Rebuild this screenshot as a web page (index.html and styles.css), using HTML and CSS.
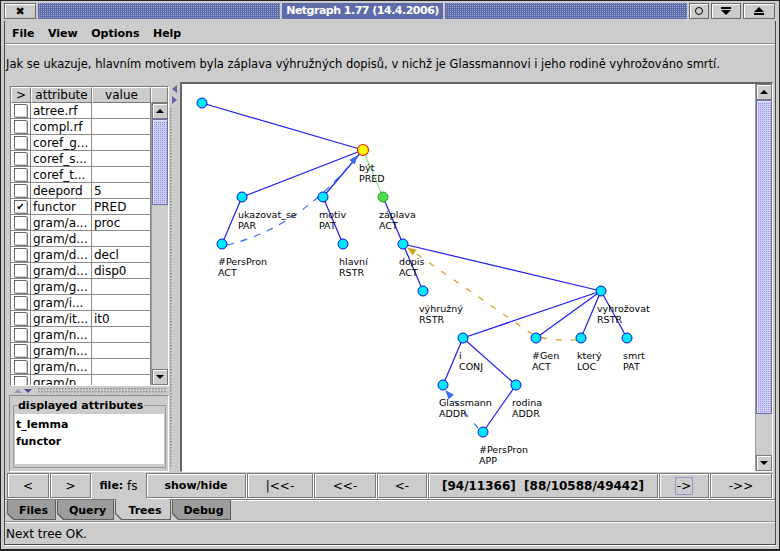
FILE: index.html
```html
<!DOCTYPE html>
<html>
<head>
<meta charset="utf-8">
<title>Netgraph</title>
<link rel="stylesheet" href="styles.css">
</head>
<body>
<div class="window">
  <div class="titlebar">
    <div class="tbtn close">✖</div>
    <div class="tfill"></div>
    <div class="ttitle">Netgraph 1.77 (14.4.2006)</div>
    <div class="tfill"></div>
    <div class="tbtn ticon"><svg width="10" height="10" viewBox="0 0 10 10"><circle cx="5" cy="5" r="3.5" fill="none" stroke="#000" stroke-width="1"/></svg></div>
    <div class="tbtn tmin"><svg width="10" height="8" viewBox="0 0 10 8"><rect x="0" y="0" width="10" height="2" fill="#000"/><polygon points="0,3 10,3 5,8" fill="#000"/></svg></div>
    <div class="tbtn tmax"><svg width="10" height="8" viewBox="0 0 10 8"><polygon points="5,0 10,5 0,5" fill="#000"/><rect x="0" y="6" width="10" height="2" fill="#000"/></svg></div>
  </div>
  <div class="inner">
    <div class="menubar">
      <span class="menu">File</span>
      <span class="menu">View</span>
      <span class="menu">Options</span>
      <span class="menu">Help</span>
    </div>
    <div class="sentence">Jak se ukazuje, hlavním motivem byla záplava výhružných dopisů, v nichž je Glassmannovi i jeho rodině vyhrožováno smrtí.</div>
    <div class="main">
      <div class="left">
        <div class="tablebox">
          <div class="thead">
            <div class="th">&gt;</div>
            <div class="th">attribute</div>
            <div class="th">value</div>
            <div class="th"></div>
          </div>
          <div class="tbody">
            <div class="rows">
              <div class="row"><div class="cb"><span class="box"></span></div><div class="cell">atree.rf</div><div class="cell"></div></div>
              <div class="row"><div class="cb"><span class="box"></span></div><div class="cell">compl.rf</div><div class="cell"></div></div>
              <div class="row"><div class="cb"><span class="box"></span></div><div class="cell">coref_g...</div><div class="cell"></div></div>
              <div class="row"><div class="cb"><span class="box"></span></div><div class="cell">coref_s...</div><div class="cell"></div></div>
              <div class="row"><div class="cb"><span class="box"></span></div><div class="cell">coref_t...</div><div class="cell"></div></div>
              <div class="row"><div class="cb"><span class="box"></span></div><div class="cell">deepord</div><div class="cell">5</div></div>
              <div class="row"><div class="cb"><span class="box checked">✔</span></div><div class="cell">functor</div><div class="cell">PRED</div></div>
              <div class="row"><div class="cb"><span class="box"></span></div><div class="cell">gram/a...</div><div class="cell">proc</div></div>
              <div class="row"><div class="cb"><span class="box"></span></div><div class="cell">gram/d...</div><div class="cell"></div></div>
              <div class="row"><div class="cb"><span class="box"></span></div><div class="cell">gram/d...</div><div class="cell">decl</div></div>
              <div class="row"><div class="cb"><span class="box"></span></div><div class="cell">gram/d...</div><div class="cell">disp0</div></div>
              <div class="row"><div class="cb"><span class="box"></span></div><div class="cell">gram/g...</div><div class="cell"></div></div>
              <div class="row"><div class="cb"><span class="box"></span></div><div class="cell">gram/i...</div><div class="cell"></div></div>
              <div class="row"><div class="cb"><span class="box"></span></div><div class="cell">gram/it...</div><div class="cell">it0</div></div>
              <div class="row"><div class="cb"><span class="box"></span></div><div class="cell">gram/n...</div><div class="cell"></div></div>
              <div class="row"><div class="cb"><span class="box"></span></div><div class="cell">gram/n...</div><div class="cell"></div></div>
              <div class="row"><div class="cb"><span class="box"></span></div><div class="cell">gram/n...</div><div class="cell"></div></div>
              <div class="row"><div class="cb"><span class="box"></span></div><div class="cell">gram/n...</div><div class="cell"></div></div>
            </div>
            <div class="vscroll small">
              <div class="sbtn"><span class="tri-up"></span></div>
              <div class="thumb"></div>
              <div class="track"></div>
              <div class="sbtn"><span class="tri-down"></span></div>
            </div>
          </div>
        </div>
        <div class="hsplit">
          <span class="mini-up"></span><span class="mini-down"></span>
          <div class="dots"></div>
        </div>
        <div class="attrs">
          <fieldset class="fs">
            <legend>displayed attributes</legend>
            <div class="list">
              <div>t_lemma</div>
              <div>functor</div>
            </div>
          </fieldset>
        </div>
      </div>
      <div class="vdiv">
        <span class="arr-l"></span>
        <span class="arr-r"></span>
        <div class="dots"></div>
      </div>
      <div class="graph">
        <svg class="canvas" width="573" height="387" viewBox="182 84 573 387">
          <defs>
            <marker id="ab" viewBox="0 0 10 10" refX="9" refY="5" markerWidth="9" markerHeight="9" orient="auto" markerUnits="userSpaceOnUse">
              <path d="M0,1 L10,5 L0,9 z" fill="#3a6cf0"/>
            </marker>
            <marker id="ao" viewBox="0 0 10 10" refX="9" refY="5" markerWidth="9" markerHeight="9" orient="auto" markerUnits="userSpaceOnUse">
              <path d="M0,1 L10,5 L0,9 z" fill="#d4a020"/>
            </marker>
          </defs>
          <g stroke="#1c1cf0" stroke-width="1.2" fill="none">
            <line x1="202" y1="103" x2="363" y2="150"/>
            <line x1="363" y1="150" x2="242" y2="197"/>
            <line x1="363" y1="150" x2="323" y2="197"/>
            <line x1="242" y1="197" x2="222" y2="244"/>
            <line x1="323" y1="197" x2="343" y2="244"/>
            <line x1="383" y1="197" x2="403" y2="244"/>
            <line x1="403" y1="244" x2="423" y2="291"/>
            <line x1="403" y1="244" x2="601" y2="291"/>
            <line x1="601" y1="291" x2="463" y2="338"/>
            <line x1="601" y1="291" x2="536" y2="338"/>
            <line x1="601" y1="291" x2="581" y2="338"/>
            <line x1="601" y1="291" x2="627" y2="338"/>
            <line x1="463" y1="338" x2="443" y2="385"/>
            <line x1="463" y1="338" x2="516" y2="385"/>
            <line x1="516" y1="385" x2="483" y2="432"/>
          </g>
          <line x1="363" y1="150" x2="383" y2="197" stroke="#66e066" stroke-width="1"/>
          <path d="M227,245 Q300,228 357,156" stroke="#3a6cf0" stroke-width="1.2" fill="none" stroke-dasharray="7 7" marker-end="url(#ab)"/>
          <path d="M478,428 L446,391" stroke="#3a6cf0" stroke-width="1.2" fill="none" stroke-dasharray="6 9" marker-end="url(#ab)"/>
          <path d="M577,340 Q545,341 532,334 L408,248" stroke="#d4a020" stroke-width="1.2" fill="none" stroke-dasharray="6 9" marker-end="url(#ao)"/>
          <g fill="#00e8ff" stroke="#1010d8" stroke-width="1">
            <circle cx="202" cy="103" r="5"/>
            <circle cx="242" cy="197" r="5"/>
            <circle cx="323" cy="197" r="5"/>
            <circle cx="222" cy="244" r="5"/>
            <circle cx="343" cy="244" r="5"/>
            <circle cx="403" cy="244" r="5"/>
            <circle cx="423" cy="291" r="5"/>
            <circle cx="601" cy="291" r="5"/>
            <circle cx="463" cy="338" r="5"/>
            <circle cx="536" cy="338" r="5"/>
            <circle cx="581" cy="338" r="5"/>
            <circle cx="627" cy="338" r="5"/>
            <circle cx="443" cy="385" r="5"/>
            <circle cx="516" cy="385" r="5"/>
            <circle cx="483" cy="432" r="5"/>
          </g>
          <circle cx="383" cy="197" r="5" fill="#50dc50" stroke="#2a9a2a" stroke-width="1"/>
          <circle cx="363" cy="150" r="5.5" fill="#ffff00" stroke="#ee2200" stroke-width="1.2"/>
          <g class="lbl">
            <text x="359" y="171">být</text><text x="359" y="182">PRED</text>
            <text x="238" y="218">ukazovat_se</text><text x="238" y="229">PAR</text>
            <text x="319" y="218">motiv</text><text x="319" y="229">PAT</text>
            <text x="379" y="218">záplava</text><text x="379" y="229">ACT</text>
            <text x="218" y="265">#PersPron</text><text x="218" y="276">ACT</text>
            <text x="339" y="265">hlavní</text><text x="339" y="276">RSTR</text>
            <text x="399" y="265">dopis</text><text x="399" y="276">ACT</text>
            <text x="419" y="312">výhružný</text><text x="419" y="323">RSTR</text>
            <text x="597" y="312">vyhrožovat</text><text x="597" y="323">RSTR</text>
            <text x="459" y="359">i</text><text x="459" y="370">CONJ</text>
            <text x="532" y="359">#Gen</text><text x="532" y="370">ACT</text>
            <text x="577" y="359">který</text><text x="577" y="370">LOC</text>
            <text x="623" y="359">smrt</text><text x="623" y="370">PAT</text>
            <text x="439" y="406">Glassmann</text><text x="439" y="417">ADDR</text>
            <text x="512" y="406">rodina</text><text x="512" y="417">ADDR</text>
            <text x="479" y="453">#PersPron</text><text x="479" y="464">APP</text>
          </g>
        </svg>
        <div class="vscroll big">
          <div class="sbtn"><span class="tri-up"></span></div>
          <div class="thumb"></div>
          <div class="track"></div>
          <div class="sbtn"><span class="tri-down"></span></div>
        </div>
      </div>
    </div>
    <div class="buttons">
      <div class="btn">&lt;</div>
      <div class="btn">&gt;</div>
      <div class="label"><b>file:</b>&nbsp;fs</div>
      <div class="btn bold">show/hide</div>
      <div class="btn">|&lt;&lt;-</div>
      <div class="btn">&lt;&lt;-</div>
      <div class="btn">&lt;-</div>
      <div class="btn bold big">[94/11366]&nbsp; [88/10588/49442]</div>
      <div class="btn"><span class="focus">-&gt;</span></div>
      <div class="btn">-&gt;&gt;</div>
    </div>
    <div class="tabs">
      <div class="tab"><span>Files</span></div>
      <div class="tab"><span>Query</span></div>
      <div class="tab sel"><span>Trees</span></div>
      <div class="tab"><span>Debug</span></div>
    </div>
    <div class="status">Next tree OK.</div>
  </div>
</div>
</body>
</html>
```
FILE: styles.css
```css
* { box-sizing: border-box; }
html, body { margin: 0; padding: 0; background: #cccccc; }
body { font-family: "DejaVu Sans", "Liberation Sans", sans-serif; font-size: 12px; color: #000; }

.window {
  width: 780px; height: 551px;
  background: #cccccc;
  border: 1px solid #222;
  border-bottom-width: 2px;
  padding: 0 3px 4px 3px;
  display: flex; flex-direction: column;
  overflow: hidden;
}

/* title bar */
.titlebar {
  height: 20px; flex: none;
  display: flex; align-items: center; gap: 2px;
  padding: 1px 0 1px 0;
}
.tbtn {
  height: 16px; background: #cccccc;
  border: 1px solid #6a6a6a;
  box-shadow: inset 1px 1px 0 #fff;
  display: flex; align-items: center; justify-content: center;
  flex: none;
}
.close { width: 32px; font-size: 11px; font-weight: bold; }
.ticon { width: 20px; }
.tmin { width: 30px; }
.tmax { width: 32px; margin-right: 1px; }
.tfill {
  flex: 1; height: 16px;
  background-color: #5d6aa8;
  background-image: conic-gradient(#9aa5d8 0 25%, transparent 0 100%);
  background-size: 2px 2px;
}
.ttitle {
  height: 16px; line-height: 16px;
  background: #5f6caa; color: #fff;
  font-weight: bold; font-size: 11px; letter-spacing: -0.5px;
  padding: 0 4px; white-space: nowrap;
}

/* inner frame */
.inner {
  flex: 1; display: flex; flex-direction: column;
  border: 1px solid #4a4a4a; border-top: 0;
  min-height: 0;
}
.menubar {
  height: 23px; flex: none;
  display: flex; align-items: center;
  border-bottom: 1px solid #8a8a8a;
  font-weight: bold; font-size: 11px;
  padding-top: 2px;
}
.menu { padding: 0 6.5px 0 7px; }
.sentence {
  height: 36px; flex: none; line-height: 34px;
  padding-top: 2px;
  padding-left: 1px; white-space: nowrap;
  border-top: 1px solid #fff;
  font-size: 11.5px;
}

/* main split area */
.main {
  height: 392px; flex: none;
  display: flex;
  padding: 2px 2px 0 3px;
}
.left {
  width: 161px; flex: none;
  display: flex; flex-direction: column;
  padding: 4px 0 0 1px;
}
.tablebox {
  height: 300px; flex: none;
  margin-left: 1px;
  border: 1px solid #7a7a7a;
  border-right-color: #fff; border-bottom-color: #fff;
  display: flex; flex-direction: column;
  background: #cccccc;
}
.thead {
  height: 16px; flex: none;
  display: grid; grid-template-columns: 20px 61px 59px 17px;
}
.th {
  border-top: 1px solid #fff; border-left: 1px solid #fff;
  border-right: 1px solid #7a7a7a; border-bottom: 1px solid #7a7a7a;
  text-align: center; line-height: 14px; font-size: 12px;
  background: #cccccc;
}
.tbody { flex: 1; display: flex; min-height: 0; }
.rows { width: 140px; flex: none; background: #fff; overflow: hidden; }
.row {
  height: 16px;
  display: grid; grid-template-columns: 20px 61px 59px;
}
.row > div {
  border-right: 1px solid #8a8a8a; border-bottom: 1px solid #8a8a8a;
  line-height: 16px; padding-left: 2px; white-space: nowrap; overflow: hidden;
}
.cb { background: #fff; display: flex; align-items: center; justify-content: center; padding-left: 0 !important; }
.box {
  width: 13px; height: 13px;
  border: 1px solid #6a6a6a;
  border-right-color: #cfcfcf; border-bottom-color: #cfcfcf;
  box-shadow: inset 1px 1px 0 #fff, 1px 1px 0 #777;
  background: #fff;
  font-size: 10px; line-height: 11px; text-align: center; font-weight: bold;
}

/* scrollbars */
.vscroll {
  width: 17px; flex: none;
  display: flex; flex-direction: column;
  background: #cccccc;
  border-left: 1px solid #9a9a9a;
}
.sbtn {
  height: 16px; flex: none;
  border: 1px solid #7a7a7a;
  box-shadow: inset 1px 1px 0 #fff;
  background: #cccccc;
  display: flex; align-items: center; justify-content: center;
}
.tri-up { width: 0; height: 0; border-left: 4px solid transparent; border-right: 4px solid transparent; border-bottom: 4px solid #000; }
.tri-down { width: 0; height: 0; border-left: 4px solid transparent; border-right: 4px solid transparent; border-top: 4px solid #000; }
.thumb {
  flex: none;
  border: 1px solid #6e6ea6;
  box-shadow: inset 1px 1px 0 #e6e6ff;
  background-color: #ccccff;
  background-image: conic-gradient(#9696cc 0 25%, transparent 0 100%);
  background-size: 2px 2px;
}
.track { flex: 1; background: #cccccc; }
.small .thumb { height: 86px; }
.big .thumb { height: 314px; }

.hsplit {
  height: 9px; flex: none;
  display: flex; align-items: center; gap: 2px;
  padding-left: 5px;
}
.mini-up { width: 0; height: 0; border-left: 4px solid transparent; border-right: 4px solid transparent; border-bottom: 4px solid #9a9ac0; }
.mini-down { width: 0; height: 0; border-left: 4px solid transparent; border-right: 4px solid transparent; border-top: 4px solid #4a4a9a; }
.dots {
  flex: 1; align-self: stretch;
  background-image: conic-gradient(#9a9a9a 0 25%, transparent 0 100%);
  background-size: 3px 3px;
  margin: 2px 3px;
}

.attrs {
  flex: 1;
  border: 1px solid #8a8a8a;
  border-right-color: #fff; border-bottom-color: #fff;
  padding: 3px 2px 3px 3px;
  display: flex;
}
.fs {
  flex: 1; margin: 0; min-width: 0;
  border: 1px solid #999;
  padding: 2px 1px 1px 1px;
}
.fs legend {
  font-weight: bold; font-size: 11px; padding: 0 1px; margin-left: 2px;
}
.list {
  background: #fff; height: 50px;
  font-weight: bold; font-size: 11px;
  padding: 2px 0 0 1px; line-height: 17px;
}

.vdiv {
  width: 11px; flex: none;
  display: flex; flex-direction: column; align-items: center;
  padding-top: 3px; gap: 3px;
}
.arr-l { width: 0; height: 0; border-top: 4px solid transparent; border-bottom: 4px solid transparent; border-right: 5px solid #6262a6; }
.arr-r { width: 0; height: 0; border-top: 4px solid transparent; border-bottom: 4px solid transparent; border-left: 5px solid #6262a6; }
.vdiv .dots { width: 3px; flex: 1; margin: 1px 0 4px 0; }

.graph {
  flex: 1; display: flex;
  border-top: 2px solid #666; border-left: 2px solid #666;
  border-right: 1px solid #fff; border-bottom: 1px solid #fff;
  background: #fff;
  min-width: 0;
}
.canvas { display: block; flex: none; background: #fff; }
.lbl text { font-family: "DejaVu Sans", sans-serif; font-size: 9.5px; fill: #000; }
.big { border-left: 1px solid #9a9a9a; }

/* buttons */
.buttons {
  height: 27px; flex: none;
  display: grid;
  grid-template-columns: 42px 41px 53px 100px 66px 62px 50px 230px 50px 62px;
  gap: 1px;
  padding: 1px 0 1px 2px;
}
.btn {
  border: 1px solid #7a7a7a;
  box-shadow: inset 1px 1px 0 #fff, 1px 1px 0 #fff;
  background: #cccccc;
  display: flex; align-items: center; justify-content: center;
  font-size: 12px; white-space: nowrap;
}
.btn.bold { font-weight: bold; font-size: 11px; }
.btn.big { font-size: 12px; }
.label { display: flex; align-items: center; justify-content: center; font-size: 12px; white-space: nowrap; }
.label b { font-size: 11px; }
.focus { border: 1px solid #9a9ad0; padding: 1px 1px; line-height: 14px; }

/* tabs */
.tabs {
  height: 22px; flex: none;
  display: flex;
  padding-left: 2px;
  border-top: 1px solid #7a7a7a;
  box-shadow: inset 0 1px 0 #fff;
}
.tab {
  height: 20px;
  background: #5e5e5e;
  padding: 0 1px 1px 1px;
  clip-path: polygon(0 0, 100% 0, 100% 100%, 6px 100%, 0 calc(100% - 6px));
  margin-right: 1px;
}
.tab span {
  display: flex; align-items: center; justify-content: center;
  height: 100%;
  background: #9c9c9c;
  clip-path: polygon(0 0, 100% 0, 100% 100%, 6px 100%, 0 calc(100% - 6px));
  font-weight: bold; font-size: 11px;
  padding-left: 4px; padding-top: 2px;
}
.tab:nth-child(1) { width: 49px; }
.tab:nth-child(2) { width: 57px; }
.tab:nth-child(3) { width: 56px; }
.tab:nth-child(4) { width: 59px; }
.tab.sel { margin-top: -1px; height: 21px; }
.tab.sel span { background: #cccccc; padding-top: 3px; }

.status {
  flex: 1;
  border-top: 1px solid #8a8a8a;
  box-shadow: inset 0 1px 0 #fff;
  padding-left: 1px; padding-top: 2px;
  line-height: 21px;
  border-bottom: 1px solid #fff;
}
```
